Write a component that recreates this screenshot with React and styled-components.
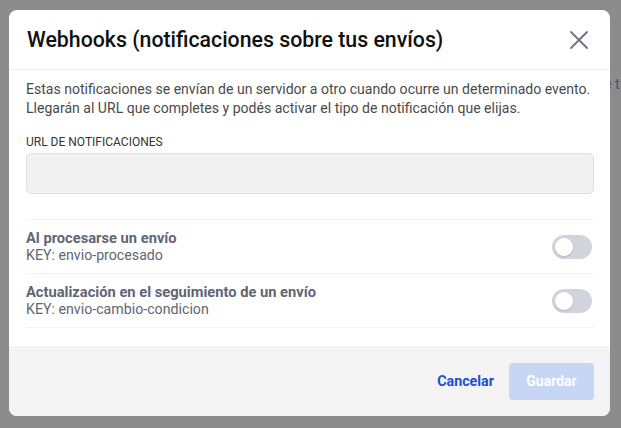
import React from "react";
import styled, { createGlobalStyle } from "styled-components";

const GlobalStyle = createGlobalStyle`
  html, body {
    margin: 0;
    padding: 0;
    height: 100%;
  }
  body {
    font-family: Roboto, "Liberation Sans", sans-serif;
    background: #8c8c8c;
  }
`;

const Backdrop = styled.div`
  width: 621px;
  height: 428px;
  background: #8c8c8c;
  padding: 10px 11px 12px 9px;
  box-sizing: border-box;
  position: relative;
  overflow: hidden;
`;

const PeekText = styled.span`
  position: absolute;
  left: 604px;
  top: 76px;
  font-size: 14px;
  color: #3f5477;
`;

const Modal = styled.div`
  width: 601px;
  height: 406px;
  background: #fff;
  border-radius: 8px;
  display: flex;
  flex-direction: column;
  overflow: hidden;
  position: relative;
  z-index: 1;
`;

const Header = styled.div`
  display: flex;
  align-items: center;
  justify-content: space-between;
  height: 59px;
  padding: 0 20px 0 18px;
  border-bottom: 1px solid #f0f0f0;
`;

const Title = styled.h2`
  margin: 0;
  font-size: 21.3px;
  font-weight: 500;
  color: #111;
`;

const CloseButton = styled.button`
  border: none;
  background: none;
  padding: 0;
  display: flex;
  color: #6b7280;
  cursor: pointer;
`;

const Body = styled.div`
  flex: 1;
  padding: 10px 16px 0 17px;
`;

const Description = styled.p`
  margin: 0;
  font-size: 14.05px;
  line-height: 19px;
  color: #4a4a4a;
`;

const Label = styled.div`
  margin-top: 17px;
  font-size: 12px;
  color: #333;
  text-transform: uppercase;
`;

const Input = styled.div`
  margin-top: 4px;
  height: 41px;
  background: #f1f1f1;
  border: 1px solid #dfdfe2;
  border-radius: 5px;
  box-sizing: border-box;
`;

const List = styled.div`
  margin-top: 25px;
  border-top: 1px solid #f3f3f4;
`;

const Row = styled.div`
  display: flex;
  align-items: center;
  justify-content: space-between;
  height: 53px;
  border-bottom: 1px solid #f3f3f4;
  padding-right: 2px;
`;

const RowTitle = styled.div`
  font-size: 14.7px;
  font-weight: 700;
  color: #5f6674;
  line-height: 17px;
`;

const RowKey = styled.div`
  font-size: 14.2px;
  color: #5f6674;
  line-height: 17px;
`;

const Toggle = styled.div`
  width: 40px;
  height: 24px;
  border-radius: 12px;
  background: ${(props) => (props.on ? "#2563eb" : "#d1d5db")};
  display: flex;
  align-items: center;
  padding: 0 3px;
  box-sizing: border-box;
  justify-content: ${(props) => (props.on ? "flex-end" : "flex-start")};

  &::after {
    content: "";
    width: 18px;
    height: 18px;
    border-radius: 50%;
    background: #fff;
    box-shadow: 0 1px 2px rgba(0, 0, 0, 0.15);
  }
`;

const Footer = styled.div`
  height: 70px;
  background: #f4f4f4;
  display: flex;
  align-items: center;
  justify-content: flex-end;
  gap: 15px;
  padding: 0 16px 0 0;
`;

const TextButton = styled.button`
  border: none;
  background: none;
  font-family: inherit;
  font-size: 14.3px;
  font-weight: 700;
  color: #1d4ed8;
  padding: 0;
  cursor: pointer;
`;

const PrimaryButton = styled.button`
  border: none;
  width: 85px;
  height: 37px;
  border-radius: 4px;
  background: ${(props) => (props.disabled ? "#c8d6f6" : "#2563eb")};
  color: #fff;
  font-family: inherit;
  font-size: 14px;
  font-weight: 700;
`;

const events = [
  { title: "Al procesarse un envío", key: "envio-procesado" },
  {
    title: "Actualización en el seguimiento de un envío",
    key: "envio-cambio-condicion",
  },
];

export default function App() {
  return (
    <>
      <GlobalStyle />
      <Backdrop>
        <PeekText>e t</PeekText>
        <Modal>
          <Header>
            <Title>Webhooks (notificaciones sobre tus envíos)</Title>
            <CloseButton aria-label="Cerrar">
              <svg width="22" height="22" viewBox="0 0 22 22" fill="none">
                <path
                  d="M3 3 L19 19 M19 3 L3 19"
                  stroke="currentColor"
                  strokeWidth="1.8"
                  strokeLinecap="round"
                />
              </svg>
            </CloseButton>
          </Header>
          <Body>
            <Description>
              Estas notificaciones se envían de un servidor a otro cuando ocurre
              un determinado evento. Llegarán al URL que completes y podés
              activar el tipo de notificación que elijas.
            </Description>
            <Label>URL de notificaciones</Label>
            <Input />
            <List>
              {events.map((ev) => (
                <Row key={ev.key}>
                  <div>
                    <RowTitle>{ev.title}</RowTitle>
                    <RowKey>KEY: {ev.key}</RowKey>
                  </div>
                  <Toggle />
                </Row>
              ))}
            </List>
          </Body>
          <Footer>
            <TextButton>Cancelar</TextButton>
            <PrimaryButton disabled>Guardar</PrimaryButton>
          </Footer>
        </Modal>
      </Backdrop>
    </>
  );
}
